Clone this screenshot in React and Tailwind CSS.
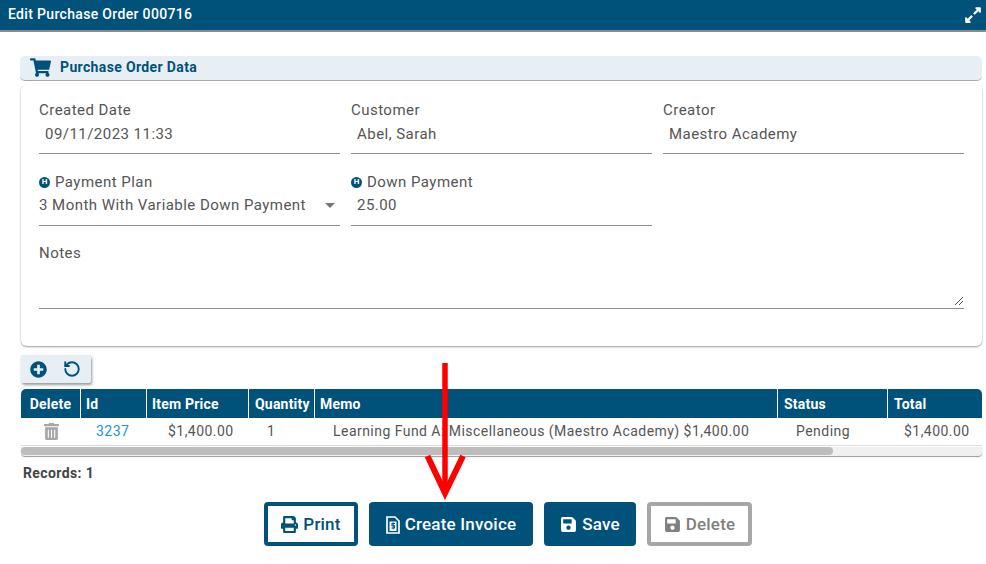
import React from "react";
import { FaShoppingCart, FaPrint, FaSave, FaTrashAlt, FaExpandAlt, FaPlusCircle } from "react-icons/fa";
import { RotateCcw } from "lucide-react";

function HintIcon() {
  return (
    <span className="mr-[5px] inline-flex h-[11px] w-[11px] items-center justify-center rounded-full bg-[#00527a] text-[8px] font-bold leading-none tracking-normal text-white">
      H
    </span>
  );
}

function Field({ label, value, hint, select }) {
  return (
    <div className="h-[54px] border-b border-[#8f8f8f] text-[15px] tracking-[0.46px] text-[#555]">
      <div className="flex h-[20px] items-center">
        {hint && <HintIcon />}
        {label}
      </div>
      <div className={`flex items-center justify-between ${hint ? "h-[26px]" : "h-[28px] pl-[6px]"}`}>
        <span className={hint && !select ? "pl-[6px]" : ""}>{value}</span>
        {select && <span className="mr-[5px] h-0 w-0 border-x-[5px] border-t-[5px] border-x-transparent border-t-[#777]" />}
      </div>
    </div>
  );
}

function InvoiceIcon() {
  return (
    <svg width="14" height="18" viewBox="0 0 14 18" className="mr-[5px]">
      <path d="M1 1h8l4 4v12H1z" fill="none" stroke="white" strokeWidth="1.7" />
      <rect x="3.5" y="5.5" width="7" height="9.5" fill="white" />
      <path d="M9 7.5H6v2.2h2.5v2.3H5.5" fill="none" stroke="#00527a" strokeWidth="1.1" />
      <path d="M7.2 6.2v7.2" stroke="#00527a" strokeWidth="0.9" />
    </svg>
  );
}

const columns = [
  { name: "Delete", w: "w-[60px] justify-center" },
  { name: "Id", w: "w-[66px] pl-[5px]" },
  { name: "Item Price", w: "w-[102px] pl-[5px]" },
  { name: "Quantity", w: "w-[66px] pl-[6px]" },
  { name: "Memo", w: "w-[463px] pl-[5px]" },
  { name: "Status", w: "w-[110px] pl-[6px]" },
  { name: "Total", w: "flex-1 pl-[6px]" },
];

function App() {
  return (
    <div className="relative h-[564px] w-[986px] overflow-hidden bg-white font-['Roboto',sans-serif]">
      <div className="box-content flex h-[30px] items-center justify-between border-b-2 border-[#8c8c8c] bg-[#00527a] pr-[4px] pl-[8px]">
        <span className="pb-[2px] text-[14px] font-medium tracking-[0.33px] text-white">Edit Purchase Order 000716</span>
        <FaExpandAlt className="text-[18px] text-white" />
      </div>

      <div className="mt-[24px] ml-[20px] w-[962px]">
        <div className="flex h-[25px] items-center rounded-[5px] border-b border-[#a8a8a8] bg-[#e7eff5] pb-[2px] pl-[10px]">
          <FaShoppingCart className="mr-[9px] text-[21px] text-[#00527a]" />
          <span className="text-[14px] font-bold tracking-[0.36px] text-[#00527a]">Purchase Order Data</span>
        </div>

        <div className="mt-[3px] ml-[1px] h-[262px] w-[961px] rounded-[6px] bg-white px-[18px] pt-[16px] shadow-[0_1px_2px_rgba(0,0,0,0.4)]">
          <div className="grid grid-cols-[301px_301px_301px] gap-x-[11px] gap-y-[18px]">
            <Field label="Created Date" value="09/11/2023 11:33" />
            <Field label="Customer" value="Abel, Sarah" />
            <Field label="Creator" value="Maestro Academy" />
            <Field hint select label="Payment Plan" value="3 Month With Variable Down Payment" />
            <Field hint label="Down Payment" value="25.00" />
          </div>
          <div className="relative mt-[17px] h-[66px] border-b border-[#8f8f8f] text-[15px] leading-[20px] tracking-[0.46px] text-[#555]">
            Notes
            <svg width="10" height="10" viewBox="0 0 10 10" className="absolute right-0 bottom-[2px]">
              <path d="M1 9L9 1M5 9L9 5" stroke="#555" strokeWidth="1" />
            </svg>
          </div>
        </div>

        <div className="mt-[9px] ml-[1px] flex h-[28px] w-[70px] items-center gap-[16px] rounded-[2px] bg-[#e7eff5] pl-[9px] shadow-[1px_2px_3px_rgba(0,0,0,0.4)]">
          <FaPlusCircle className="text-[17px] text-[#00527a]" />
          <RotateCcw size={18} strokeWidth={2.5} className="text-[#00527a]" />
        </div>

        <div className="mt-[6px] ml-[1px] w-[961px]">
          <div className="flex h-[29px] overflow-hidden rounded-t-[5px] bg-[#00527a]">
            {columns.map((col) => (
              <div
                key={col.name}
                className={`${col.w} flex items-center border-r border-white pt-[1px] text-[14px] font-bold tracking-[0.2px] text-white last:border-r-0`}
              >
                {col.name}
              </div>
            ))}
          </div>
          <div className="flex h-[28px] items-center border-b border-[#dcdcdc] text-[14px] tracking-[0.46px] text-[#555]">
            <div className="flex w-[60px] justify-center">
              <FaTrashAlt className="text-[17px] text-[#a6a6a6]" />
            </div>
            <div className="w-[66px] pl-[15px] text-[#2090f0]">3237</div>
            <div className="w-[102px] pl-[21px]">$1,400.00</div>
            <div className="w-[66px] pl-[18px]">1</div>
            <div className="w-[463px] pl-[18px]">Learning Fund A: Miscellaneous (Maestro Academy) $1,400.00</div>
            <div className="w-[110px] pl-[18px]">Pending</div>
            <div className="flex-1 pl-[16px]">$1,400.00</div>
          </div>
          <div className="mt-[1px] h-[9px] rounded-b-[4px] bg-[#f0f0f0] shadow-[0_1px_1px_rgba(0,0,0,0.4)]">
            <div className="h-[8px] w-[812px] rounded-[4px] bg-[#bdbdbd]" />
          </div>
        </div>

        <div className="mt-[7px] ml-[3px] text-[14px] leading-[20px] font-bold tracking-[0.4px] text-[#444]">Records: 1</div>
      </div>

      <div className="mt-[19px] ml-[264px] flex gap-[11px] text-[17px] font-medium tracking-[0.2px]">
        <button className="flex h-[44px] w-[94px] items-center justify-center gap-[5px] rounded-[4px] border-[4px] border-[#00527a] bg-white pt-[1px] text-[#00527a]">
          <FaPrint className="text-[17px]" />
          Print
        </button>
        <button className="flex h-[44px] w-[164px] items-center justify-center rounded-[4px] bg-[#00527a] pt-[1px] text-white">
          <InvoiceIcon />
          Create Invoice
        </button>
        <button className="flex h-[44px] w-[92px] items-center justify-center gap-[5px] rounded-[4px] bg-[#00527a] pt-[1px] text-white">
          <FaSave className="text-[17px]" />
          Save
        </button>
        <button className="flex h-[44px] w-[105px] items-center justify-center gap-[5px] rounded-[4px] border-[4px] border-[#a6a6a6] bg-white pt-[1px] text-[#808080]">
          <FaSave className="text-[17px]" />
          Delete
        </button>
      </div>

      {/* red annotation arrow */}
      <svg width="60" height="140" viewBox="0 0 60 140" className="absolute top-[362px] left-[415px]">
        <path d="M30 1V132" stroke="#ff0000" strokeWidth="5.5" fill="none" />
        <path d="M12.5 94L30 131L48 94" stroke="#ff0000" strokeWidth="6" fill="none" />
      </svg>
    </div>
  );
}

export default App;
